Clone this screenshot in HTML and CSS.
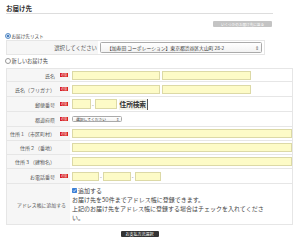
FILE: index.html
```html
<!DOCTYPE html>
<html lang="ja">
<head>
<meta charset="utf-8">
<link rel="stylesheet" href="styles.css">
</head>
<body>
<div class="page">
  <h1 class="title">お届け先</h1>
  <div class="toolbar"><span class="btn-gray">いくつかのお届け先に送る</span></div>

  <div class="radio-row"><span class="radio on"></span>お届け先リスト</div>
  <div class="list-box">
    <div class="list-label">選択してください</div>
    <div class="list-field">
      <div class="select wide"><span>【加寿田 コーポレーション】東京都渋谷区大山町 28-2</span><span class="arrows">⇕</span></div>
    </div>
  </div>

  <div class="radio-row second"><span class="radio"></span>新しいお届け先</div>
  <div class="form">
    <div class="row r14">
      <div class="label"><span class="ltext">氏名</span><span class="req">必須</span></div>
      <div class="field"><span class="inp w88"></span><span class="inp w89"></span></div>
    </div>
    <div class="row r15">
      <div class="label"><span class="ltext">氏名（フリガナ）</span><span class="req">必須</span></div>
      <div class="field"><span class="inp w88"></span><span class="inp w89"></span></div>
    </div>
    <div class="row r15">
      <div class="label"><span class="ltext">郵便番号</span><span class="req">必須</span></div>
      <div class="field"><span class="inp tall w19"></span><span class="dash">-</span><span class="inp tall w22"></span><span class="btn-search">住所検索</span></div>
    </div>
    <div class="row r15">
      <div class="label"><span class="ltext">都道府県</span><span class="req">必須</span></div>
      <div class="field"><div class="select small"><span>選択してください</span><span class="arrows">⇕</span></div></div>
    </div>
    <div class="row r14">
      <div class="label"><span class="ltext">住所１（市区町村）</span><span class="req">必須</span></div>
      <div class="field"><span class="inp full"></span></div>
    </div>
    <div class="row r14">
      <div class="label"><span class="ltext">住所２（番地）</span><span class="req blank"></span></div>
      <div class="field"><span class="inp full"></span></div>
    </div>
    <div class="row r14">
      <div class="label"><span class="ltext">住所３（建物名）</span><span class="req blank"></span></div>
      <div class="field"><span class="inp full"></span></div>
    </div>
    <div class="row r15">
      <div class="label"><span class="ltext">お電話番号</span><span class="req">必須</span></div>
      <div class="field"><span class="inp w27"></span><span class="dash">-</span><span class="inp w28"></span><span class="dash">-</span><span class="inp w26"></span></div>
    </div>
    <div class="row book">
      <div class="label"><span class="ltext small-label">アドレス帳に追加する</span></div>
      <div class="field text">
        <div class="check-line"><span class="check"><svg viewBox="0 0 10 10" width="5" height="5"><rect x="0" y="0" width="10" height="10" rx="1.5" fill="#3b7fd6"/><path d="M2.2 5.2 L4.2 7.2 L8 2.8" stroke="#fff" stroke-width="1.6" fill="none"/></svg></span>追加する</div>
        <p class="note">お届け先を50件までアドレス帳に登録できます。</p>
        <p class="note">上記のお届け先をアドレス帳に登録する場合はチェックを入れてください。</p>
      </div>
    </div>
  </div>

  <div class="actions"><span class="btn-dark">お支払方法選択</span></div>
</div>
</body>
</html>
```

FILE: styles.css
```css
html, body {
  margin: 0;
  padding: 0;
  background: #fff;
}
body {
  font-family: "Noto Sans CJK JP", "Noto Sans", sans-serif;
  color: #444;
}
.page {
  width: 300px;
  height: 244px;
  padding-left: 6px;
  box-sizing: border-box;
  overflow: hidden;
}
.title {
  margin: 0;
  width: 267px;
  padding-top: 4px;
  font-size: 6.5px;
  line-height: 9px;
  font-weight: bold;
  color: #333;
  border-bottom: 1px solid #dddddd;
}
.toolbar {
  width: 266px;
  margin-top: 7px;
  display: flex;
  justify-content: flex-end;
}
.btn-gray {
  display: flex;
  align-items: center;
  justify-content: center;
  width: 59px;
  height: 6px;
  background: #c4c4c4;
  color: #fff;
  font-size: 3.6px;
  border-radius: 1px;
}
.radio-row {
  display: flex;
  align-items: center;
  margin-left: -1px;
  margin-top: 5px;
  margin-bottom: 1px;
  height: 7px;
  font-size: 4.6px;
  color: #444;
}
.radio-row.second {
  margin-top: 2px;
  margin-bottom: 4px;
  font-size: 5.2px;
}
.radio {
  width: 4px;
  height: 4px;
  border-radius: 50%;
  border: 0.5px solid #999;
  background: #fff;
  margin-right: 0.5px;
}
.radio.on {
  border-color: #5b8fc7;
  background: radial-gradient(circle, #4a7fc0 0 1.2px, #cfe0f3 1.4px);
}
.list-box {
  width: 259px;
  height: 15px;
  box-sizing: border-box;
  border: 1px solid #e6e6e6;
  display: flex;
}
.list-label {
  width: 91px;
  background: #f6f6f6;
  font-size: 5.4px;
  color: #555;
  display: flex;
  align-items: center;
  justify-content: flex-end;
  padding-right: 1px;
  box-sizing: border-box;
}
.list-field {
  flex: 1;
  display: flex;
  align-items: center;
  padding-left: 2px;
}
.select {
  display: flex;
  align-items: center;
  justify-content: space-between;
  box-sizing: border-box;
  border: 0.5px solid #aaa;
  border-radius: 1.5px;
  background: linear-gradient(#ffffff, #f2f2f2);
  color: #333;
}
.select.wide {
  width: 162px;
  height: 11px;
  font-size: 4.8px;
  padding: 0 2px 0 6px;
}
.select.small {
  width: 50px;
  height: 6px;
  font-size: 3.8px;
  padding: 0 2px 0 3px;
}
.arrows {
  font-size: 1em;
  color: #666;
}
.form {
  width: 287px;
  box-sizing: border-box;
  border: 1px solid #e6e6e6;
  border-bottom: none;
}
.row {
  display: flex;
  border-bottom: 1px solid #e6e6e6;
  box-sizing: border-box;
}
.row.r14 { height: 14px; }
.row.r15 { height: 15px; }
.row.book { height: 41px; }
.row:first-child.r14 { height: 13px; }
.label {
  width: 63px;
  background: #f6f6f6;
  display: flex;
  align-items: center;
  justify-content: flex-end;
  box-sizing: border-box;
  padding-right: 2px;
  font-size: 5px;
  color: #555;
}
.req {
  width: 8px;
  height: 4px;
  margin-left: 5px;
  background: #d71920;
  color: #fff;
  font-size: 3px;
  line-height: 4px;
  text-align: center;
  overflow: hidden;
}
.req.blank {
  background: transparent;
}
.small-label {
  font-size: 4.9px;
  padding-right: 2px;
}
.field {
  flex: 1;
  display: flex;
  align-items: center;
  padding-left: 2px;
  gap: 2px;
}
.inp {
  display: block;
  height: 9px;
  box-sizing: border-box;
  background: #fdfbc7;
  border: 1px solid #dcd9a6;
}
.inp.tall { height: 10px; }
.w88 { width: 88px; }
.w89 { width: 89px; }
.w19 { width: 19px; }
.w22 { width: 22px; }
.w27 { width: 27px; }
.w28 { width: 28px; }
.w26 { width: 26px; }
.inp.full { width: 220px; }
.dash {
  font-size: 5px;
  color: #555;
  margin: 0 -1px;
}
.btn-search {
  display: flex;
  align-items: center;
  justify-content: center;
  width: 29px;
  height: 11px;
  box-sizing: border-box;
  background: #f4f4ea;
  border-right: 1px solid #555;
  font-size: 6.8px;
  font-weight: bold;
  color: #333;
  letter-spacing: -0.2px;
}
.field.text {
  flex-direction: column;
  align-items: flex-start;
  justify-content: flex-start;
  gap: 0;
  padding-top: 2px;
  font-size: 6px;
  line-height: 9px;
  color: #444;
}
.check-line {
  display: flex;
  align-items: center;
}
.check {
  display: flex;
  margin-right: 1px;
}
.note {
  margin: 0;
  width: 198px;
}
.actions {
  width: 267px;
  margin-top: 6px;
  display: flex;
  justify-content: center;
}
.btn-dark {
  display: flex;
  align-items: center;
  justify-content: center;
  width: 38px;
  height: 6px;
  background: #333;
  color: #fff;
  font-size: 4px;
  border-radius: 1px;
}
```
